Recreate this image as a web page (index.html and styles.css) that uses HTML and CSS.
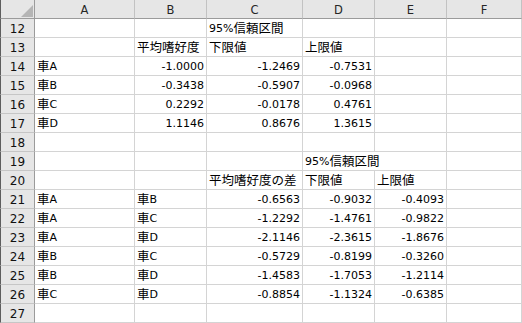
FILE: index.html
```html
<!DOCTYPE html>
<html lang="ja">
<head>
<meta charset="utf-8">
<title>Sheet</title>
<link rel="stylesheet" href="styles.css">
</head>
<body>
<div class="sheet">
  <div class="h corner"><div class="tri"></div></div>
  <div class="h">A</div><div class="h">B</div><div class="h">C</div><div class="h">D</div><div class="h">E</div><div class="h">F</div>

  <div class="r">12</div><div class="c"></div><div class="c"></div><div class="c">95%<span class="j">信頼区間</span></div><div class="c"></div><div class="c"></div><div class="c"></div>
  <div class="r">13</div><div class="c"></div><div class="c"><span class="j">平均嗜好度</span></div><div class="c"><span class="j">下限値</span></div><div class="c"><span class="j">上限値</span></div><div class="c"></div><div class="c"></div>
  <div class="r">14</div><div class="c"><span class="j">車</span>A</div><div class="c n">-1.0000</div><div class="c n">-1.2469</div><div class="c n">-0.7531</div><div class="c"></div><div class="c"></div>
  <div class="r">15</div><div class="c"><span class="j">車</span>B</div><div class="c n">-0.3438</div><div class="c n">-0.5907</div><div class="c n">-0.0968</div><div class="c"></div><div class="c"></div>
  <div class="r">16</div><div class="c"><span class="j">車</span>C</div><div class="c n">0.2292</div><div class="c n">-0.0178</div><div class="c n">0.4761</div><div class="c"></div><div class="c"></div>
  <div class="r">17</div><div class="c"><span class="j">車</span>D</div><div class="c n">1.1146</div><div class="c n">0.8676</div><div class="c n">1.3615</div><div class="c"></div><div class="c"></div>
  <div class="r">18</div><div class="c"></div><div class="c"></div><div class="c"></div><div class="c"></div><div class="c"></div><div class="c"></div>
  <div class="r">19</div><div class="c"></div><div class="c"></div><div class="c"></div><div class="c span2">95%<span class="j">信頼区間</span></div><div class="c"></div>
  <div class="r">20</div><div class="c"></div><div class="c"></div><div class="c"><span class="j">平均嗜好度の差</span></div><div class="c"><span class="j">下限値</span></div><div class="c"><span class="j">上限値</span></div><div class="c"></div>
  <div class="r">21</div><div class="c"><span class="j">車</span>A</div><div class="c"><span class="j">車</span>B</div><div class="c n">-0.6563</div><div class="c n">-0.9032</div><div class="c n">-0.4093</div><div class="c"></div>
  <div class="r">22</div><div class="c"><span class="j">車</span>A</div><div class="c"><span class="j">車</span>C</div><div class="c n">-1.2292</div><div class="c n">-1.4761</div><div class="c n">-0.9822</div><div class="c"></div>
  <div class="r">23</div><div class="c"><span class="j">車</span>A</div><div class="c"><span class="j">車</span>D</div><div class="c n">-2.1146</div><div class="c n">-2.3615</div><div class="c n">-1.8676</div><div class="c"></div>
  <div class="r">24</div><div class="c"><span class="j">車</span>B</div><div class="c"><span class="j">車</span>C</div><div class="c n">-0.5729</div><div class="c n">-0.8199</div><div class="c n">-0.3260</div><div class="c"></div>
  <div class="r">25</div><div class="c"><span class="j">車</span>B</div><div class="c"><span class="j">車</span>D</div><div class="c n">-1.4583</div><div class="c n">-1.7053</div><div class="c n">-1.2114</div><div class="c"></div>
  <div class="r">26</div><div class="c"><span class="j">車</span>C</div><div class="c"><span class="j">車</span>D</div><div class="c n">-0.8854</div><div class="c n">-1.1324</div><div class="c n">-0.6385</div><div class="c"></div>
  <div class="r">27</div><div class="c"></div><div class="c"></div><div class="c"></div><div class="c"></div><div class="c"></div><div class="c"></div>
</div>
</body>
</html>
```

FILE: styles.css
```css
* {
  box-sizing: border-box;
}

html, body {
  margin: 0;
  padding: 0;
  background: #ffffff;
}

.sheet {
  display: grid;
  grid-template-columns: 35px 100px 72px 96px 72px 72px 75px;
  grid-auto-rows: 19px;
  width: 522px;
  font-family: "DejaVu Sans", "Noto Sans CJK JP", sans-serif;
  font-size: 11px;
  color: #000000;
}

.h {
  background: #e6e6e6;
  border-right: 1px solid #c2c2c2;
  border-bottom: 1px solid #9b9b9b;
  text-align: center;
  line-height: 16px;
  padding-top: 2px;
  font-size: 11.5px;
  color: #262626;
}

.h:last-child {
  border-right-color: #d4d4d4;
}

.corner {
  border-left: 1px solid #5e5e5e;
  border-right-color: #9b9b9b;
  display: flex;
  justify-content: flex-end;
  align-items: flex-end;
  padding: 0 1px 1px 0;
}

.tri {
  width: 12px;
  height: 12px;
  background: #b5b5b5;
  clip-path: polygon(100% 0, 100% 100%, 0 100%);
}

.r {
  background: #e6e6e6;
  border-left: 1px solid #5e5e5e;
  border-right: 1px solid #9b9b9b;
  border-bottom: 1px solid #c6c6c6;
  text-align: center;
  line-height: 16px;
  padding-top: 2px;
  font-size: 12px;
  color: #111111;
}

.c {
  border-right: 1px solid #d4d4d4;
  border-bottom: 1px solid #d4d4d4;
  line-height: 16px;
  padding: 2px 2px 0 2px;
  white-space: nowrap;
  overflow: hidden;
}

.n {
  text-align: right;
}

.span2 {
  grid-column: span 2;
}

.j {
  font-family: "Noto Sans CJK JP", sans-serif;
  font-size: 12.5px;
  line-height: 10px;
  vertical-align: -1px;
}
```
